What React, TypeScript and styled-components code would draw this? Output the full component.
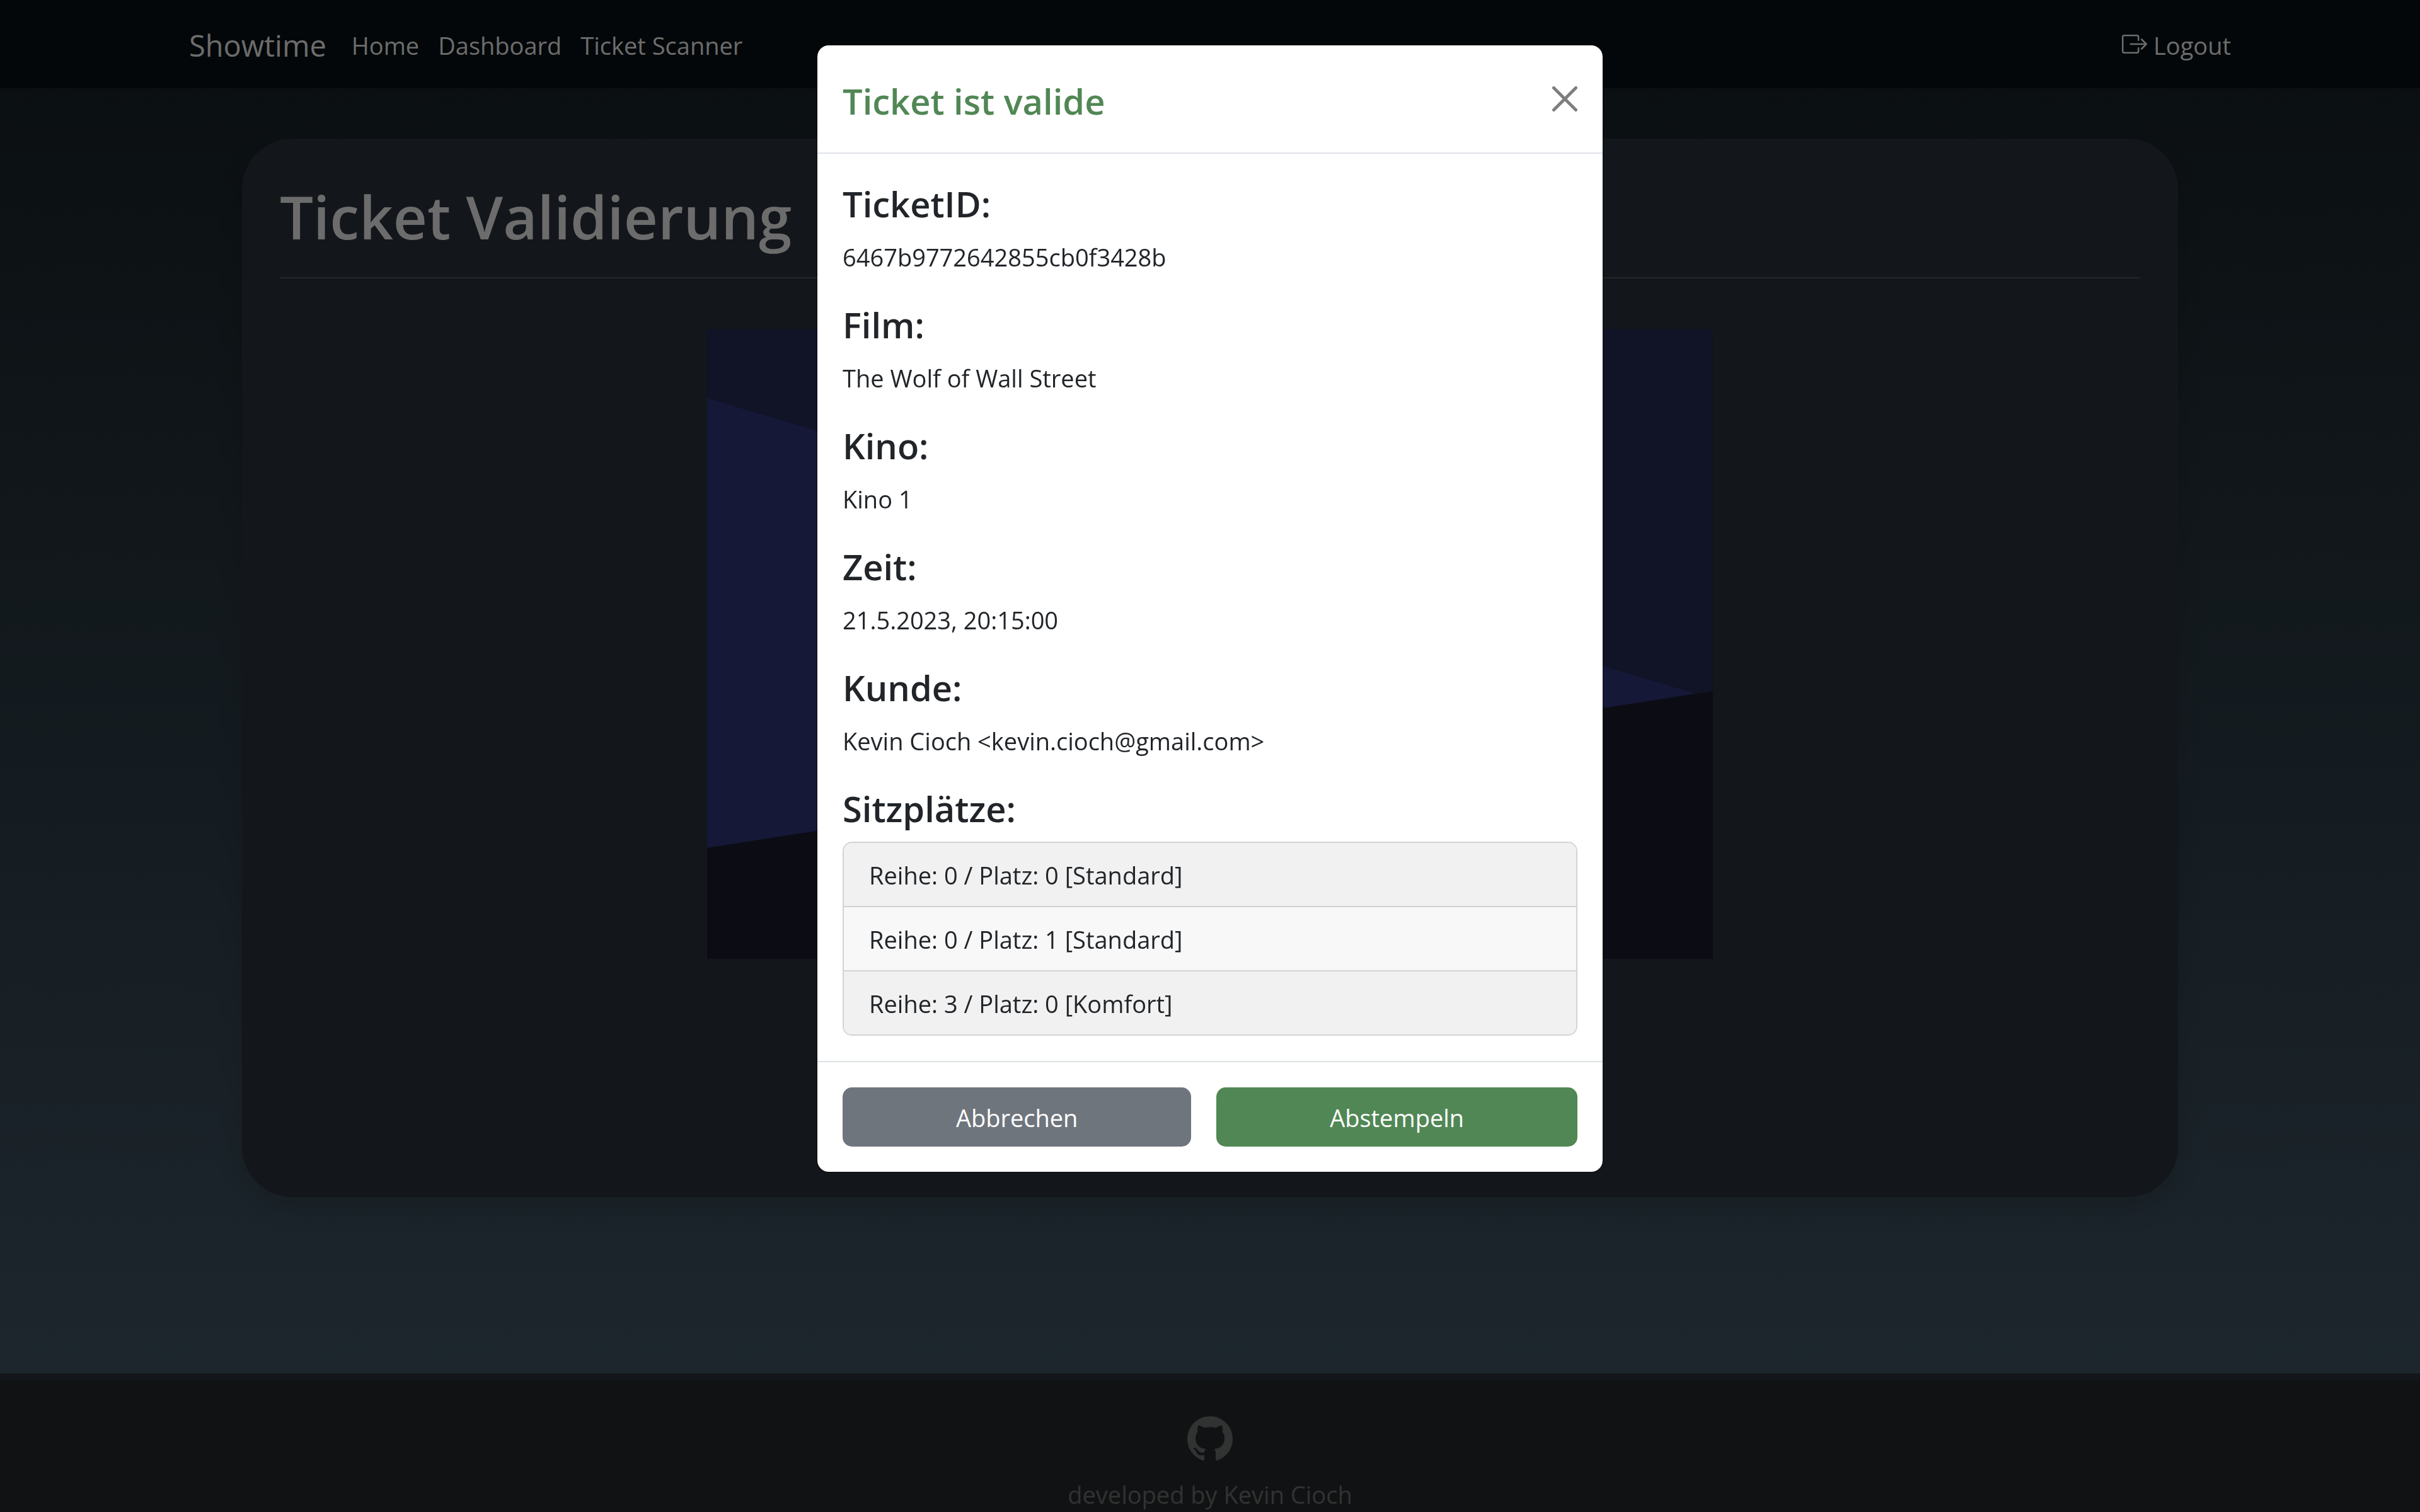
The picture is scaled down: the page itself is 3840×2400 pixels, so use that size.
import React from "react";
import styled, { createGlobalStyle } from "styled-components";
import { BsBoxArrowRight, BsGithub } from "react-icons/bs";

const GlobalStyle = createGlobalStyle`
  *, *::before, *::after { box-sizing: border-box; }
  html, body { margin: 0; height: 100%; overflow: hidden; }
  body {
    font-family: "Open Sans", "Noto Sans", sans-serif;
    font-size: 38px;
    line-height: 64px;
    color: #212529;
  }
  h1, h2, h3, p, ul { margin: 0; padding: 0; }
  ul { list-style: none; }
  a { color: inherit; text-decoration: none; }
`;

const Page = styled.div`
  display: flex;
  flex-direction: column;
  height: 100vh;
  background: linear-gradient(#141c20, #3e5261);
`;

const Navbar = styled.header`
  flex: none;
  background: #070f13;
  color: #d8d8d8;
`;

const NavContainer = styled.div`
  display: flex;
  align-items: center;
  max-width: 3300px;
  height: 140px;
  margin: 0 auto;
  padding: 4px 30px 0;
`;

const Brand = styled.a`
  margin-right: 40px;
  font-size: 47px;
`;

const NavLinks = styled.nav`
  display: flex;
  flex: 1;
  gap: 30px;
`;

const LogoutLink = styled.a`
  display: flex;
  align-items: center;
  gap: 10px;

  svg { margin-bottom: 4px; }
`;

const Main = styled.main`
  flex: 1 0 auto;
`;

const Card = styled.section`
  width: 80%;
  height: 70vh;
  margin: 80px auto;
  padding: 60px;
  border-radius: 80px;
  background: #262d34;
  box-shadow: 0 20px 40px rgba(0, 0, 0, 0.12);
`;

const CardTitle = styled.h1`
  padding-bottom: 32px;
  border-bottom: 2px solid #4d5155;
  font-size: 94px;
  font-weight: 600;
  line-height: 128px;
  color: #d8d8d8;
`;

const CameraView = styled.svg`
  display: block;
  width: 1596px;
  max-width: 100%;
  height: 1000px;
  margin: 80px auto 0;
`;

const Footer = styled.footer`
  display: flex;
  flex: none;
  flex-direction: column;
  align-items: center;
  gap: 20px;
  height: 220px;
  padding-top: 58px;
  border-top: 10px solid #262d35;
  background: #222527;
  color: #626464;
  white-space: nowrap;

  svg { flex: none; }
`;

const Backdrop = styled.div`
  position: fixed;
  inset: 0;
  padding: 70px 0;
  background: rgba(0, 0, 0, 0.5);
`;

const Dialog = styled.div`
  max-width: 1250px;
  margin: 0 auto;
  border: 2px solid rgba(0, 0, 0, 0.175);
  border-radius: 20px;
  background: #fff;
  background-clip: padding-box;
`;

const DialogHeader = styled.div`
  display: flex;
  align-items: center;
  justify-content: space-between;
  padding: 40px;
  border-bottom: 2px solid #dee2e6;
`;

const DialogTitle = styled.h2`
  padding-top: 6px;
  font-size: 56px;
  font-weight: 600;
  line-height: 84px;
  color: #518755;
`;

const CloseButton = styled.button`
  display: flex;
  padding: 0;
  border: 0;
  background: none;
  color: #000;
  opacity: 0.5;
  cursor: pointer;
`;

const DialogBody = styled.div`
  padding: 40px;
`;

const Label = styled.h3`
  margin-bottom: 14px;
  font-size: 56px;
  font-weight: 600;
  line-height: 78px;
`;

const Value = styled.p`
  margin-bottom: 36px;
`;

const SeatList = styled.ul`
  border: 2px solid #d3d3d3;
  border-radius: 15px;
  overflow: hidden;
`;

const Seat = styled.li`
  padding: 19px 40px 17px;
  background: #f1f1f1;

  &:nth-child(even) { background: #f8f8f8; }
  & + & { border-top: 2px solid #d3d3d3; }
`;

const DialogFooter = styled.div`
  display: flex;
  gap: 40px;
  padding: 40px;
  border-top: 2px solid #dee2e6;
`;

const ActionButton = styled.button<{ $tone: string }>`
  flex: 1 1 auto;
  padding: 16px 30px 14px;
  border: 0;
  border-radius: 15px;
  background: ${({ $tone }) => $tone};
  color: #fff;
  font: inherit;
  cursor: pointer;
`;

const details = [
  { label: "TicketID:", value: "6467b9772642855cb0f3428b" },
  { label: "Film:", value: "The Wolf of Wall Street" },
  { label: "Kino:", value: "Kino 1" },
  { label: "Zeit:", value: "21.5.2023, 20:15:00" },
  { label: "Kunde:", value: "Kevin Cioch <kevin.cioch@gmail.com>" },
];

const seats = [
  { row: 0, seat: 0, kind: "Standard" },
  { row: 0, seat: 1, kind: "Standard" },
  { row: 3, seat: 0, kind: "Komfort" },
];

export default function App() {
  return (
    <>
      <GlobalStyle />
      <Page>
        <Navbar>
          <NavContainer>
            <Brand href="#">Showtime</Brand>
            <NavLinks>
              <a href="#home">Home</a>
              <a href="#dashboard">Dashboard</a>
              <a href="#scanner">Ticket Scanner</a>
            </NavLinks>
            <LogoutLink href="#logout">
              <BsBoxArrowRight size={40} />
              Logout
            </LogoutLink>
          </NavContainer>
        </Navbar>
        <Main>
          <Card>
            <CardTitle>Ticket Validierung</CardTitle>
            <CameraView viewBox="0 0 1596 1000" preserveAspectRatio="none">
              <rect width="1596" height="1000" fill="#23264e" />
              <polygon points="0,110 1569,579 0,824" fill="#2a306c" />
              <polygon points="0,824 1596,575 1596,1000 0,1000" fill="#18182a" />
            </CameraView>
          </Card>
        </Main>
        <Footer>
          <BsGithub size={72} />
          <p>developed by Kevin Cioch</p>
        </Footer>
      </Page>
      <Backdrop>
        <Dialog role="dialog" aria-modal="true" aria-labelledby="dialog-title">
          <DialogHeader>
            <DialogTitle id="dialog-title">Ticket ist valide</DialogTitle>
            <CloseButton type="button" aria-label="Schließen">
              <svg width="40" height="40" viewBox="0 0 16 16" fill="currentColor">
                <path d="M.293.293a1 1 0 0 1 1.414 0L8 6.586 14.293.293a1 1 0 1 1 1.414 1.414L9.414 8l6.293 6.293a1 1 0 0 1-1.414 1.414L8 9.414l-6.293 6.293a1 1 0 0 1-1.414-1.414L6.586 8 .293 1.707a1 1 0 0 1 0-1.414z" />
              </svg>
            </CloseButton>
          </DialogHeader>
          <DialogBody>
            {details.map(({ label, value }) => (
              <React.Fragment key={label}>
                <Label>{label}</Label>
                <Value>{value}</Value>
              </React.Fragment>
            ))}
            <Label>Sitzplätze:</Label>
            <SeatList>
              {seats.map(({ row, seat, kind }) => (
                <Seat key={`${row}-${seat}`}>{`Reihe: ${row} / Platz: ${seat} [${kind}]`}</Seat>
              ))}
            </SeatList>
          </DialogBody>
          <DialogFooter>
            <ActionButton type="button" $tone="#6f757d">Abbrechen</ActionButton>
            <ActionButton type="button" $tone="#518755">Abstempeln</ActionButton>
          </DialogFooter>
        </Dialog>
      </Backdrop>
    </>
  );
}
